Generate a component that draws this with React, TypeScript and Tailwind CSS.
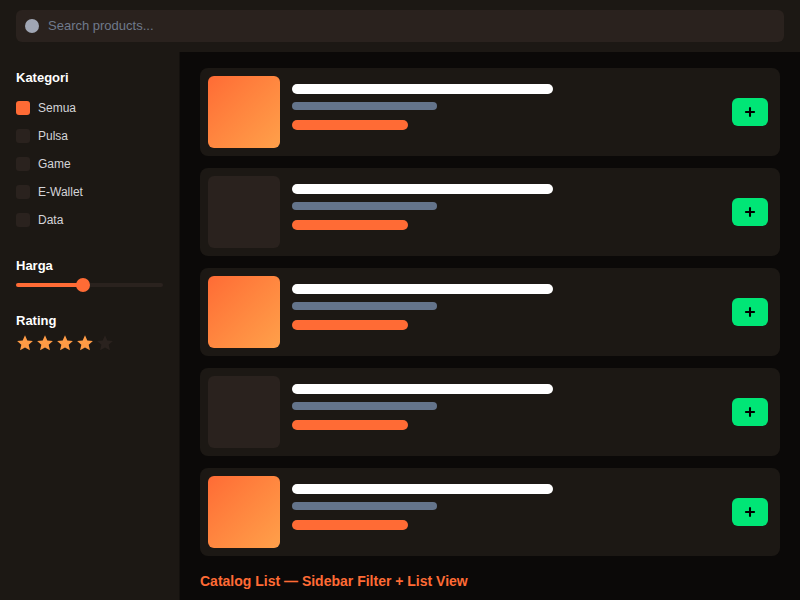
import { Plus } from 'lucide-react';

const categories = ['Semua', 'Pulsa', 'Game', 'E-Wallet', 'Data'];
const products = [true, false, true, false, true];

const Star = ({ filled }: { filled: boolean }) => (
  <svg width="18" height="18" viewBox="0 0 24 24">
    <path
      d="M12 1.8l3.1 6.9 7.4.7-5.6 5 1.7 7.4L12 18l-6.6 3.8 1.7-7.4-5.6-5 7.4-.7z"
      fill={filled ? '#ff9b45' : '#2a221e'}
    />
  </svg>
);

const App = () => {
  return (
    <div className="w-[800px] h-[600px] overflow-hidden bg-[#0b0908] flex flex-col" style={{ fontFamily: '"Liberation Sans", Arial, sans-serif' }}>
      {/* Header */}
      <div className="h-[52px] bg-[#1c1814] px-4 pt-[10px] shrink-0">
        <div className="h-8 rounded-md bg-[#2a221e] flex items-center px-[9px] gap-[9px]">
          <div className="w-[14px] h-[14px] rounded-full bg-[#a0a6b4]" />
          <span className="text-[13px] text-[#6f7a8c]">Search products...</span>
        </div>
      </div>

      <div className="flex flex-1 min-h-0">
        {/* Sidebar */}
        <div className="w-[180px] shrink-0 bg-[#1c1814] border-r border-[#14110e] px-4 pt-[18px]">
          <h3 className="text-[13px] font-bold text-white leading-4">Kategori</h3>
          <div className="mt-[15px] flex flex-col gap-[14px]">
            {categories.map((c, i) => (
              <div key={c} className="flex items-center gap-2 h-[14px]">
                <div className={`w-[14px] h-[14px] rounded-[3px] ${i === 0 ? 'bg-[#ff6b35]' : 'bg-[#2a221e]'}`} />
                <span className="text-[12px] text-[#d4d4d8]">{c}</span>
              </div>
            ))}
          </div>

          <h3 className="mt-[31px] text-[13px] font-bold text-white leading-4">Harga</h3>
          <div className="mt-[4px] relative h-[14px] flex items-center">
            <div className="w-full h-[4px] rounded-full bg-[#2a221e]">
              <div className="w-[67px] h-full rounded-full bg-[#ff6b35]" />
            </div>
            <div className="absolute left-[60px] top-0 w-[14px] h-[14px] rounded-full bg-[#ff6b35]" />
          </div>

          <h3 className="mt-[21px] text-[13px] font-bold text-white leading-4">Rating</h3>
          <div className="mt-[5px] flex gap-[2px]">
            {[1, 2, 3, 4, 5].map((n) => (
              <Star key={n} filled={n <= 4} />
            ))}
          </div>
        </div>

        {/* Main list */}
        <div className="flex-1 px-5 pt-4">
          <div className="flex flex-col gap-3">
            {products.map((hot, i) => (
              <div key={i} className="h-[88px] rounded-lg bg-[#1c1814] flex items-center px-2">
                <div className={`w-[72px] h-[72px] rounded-md shrink-0 ${hot ? 'bg-gradient-to-br from-[#ff6b35] to-[#ffa04a]' : 'bg-[#2a221e]'}`} />
                <div className="ml-3 flex-1 flex flex-col self-start pt-4">
                  <div className="w-[261px] h-[10px] rounded-full bg-white" />
                  <div className="mt-2 w-[145px] h-2 rounded-full bg-[#64748b]" />
                  <div className="mt-[10px] w-[116px] h-[10px] rounded-full bg-[#ff6b35]" />
                </div>
                <button className="w-9 h-7 mr-1 rounded-md bg-[#00e676] flex items-center justify-center">
                  <Plus className="w-[14px] h-[14px] text-black" strokeWidth={3.5} />
                </button>
              </div>
            ))}
          </div>
          <p className="mt-[15px] text-[14px] font-bold text-[#ff6b35]">Catalog List — Sidebar Filter + List View</p>
        </div>
      </div>
    </div>
  );
};

export default App;
